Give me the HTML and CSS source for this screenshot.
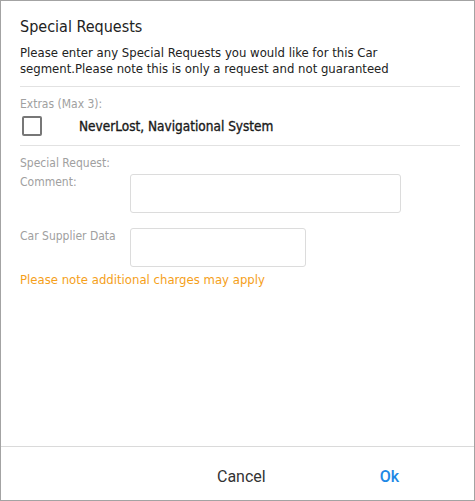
FILE: index.html
```html
<!DOCTYPE html>
<html>
<head>
<meta charset="utf-8">
<link rel="stylesheet" href="styles.css">
</head>
<body>
<div class="dialog">
  <div class="content">
    <h1 class="title">Special Requests</h1>
    <p class="intro">Please enter any Special Requests you would like for this Car segment.Please note this is only a request and not guaranteed</p>
    <div class="section">
      <div class="muted">Extras (Max 3):</div>
      <label class="extra">
        <span class="checkbox"></span>
        <span class="extra-label">NeverLost, Navigational System</span>
      </label>
    </div>
    <div class="section section-last">
      <div class="muted">Special Request:</div>
      <div class="field">
        <div class="muted field-label">Comment:</div>
        <div class="box box-comment"></div>
      </div>
      <div class="field">
        <div class="muted field-label">Car Supplier Data</div>
        <div class="box box-supplier"></div>
      </div>
      <div class="warning">Please note additional charges may apply</div>
    </div>
  </div>
  <div class="footer">
    <button class="btn btn-cancel">Cancel</button>
    <button class="btn btn-ok">Ok</button>
  </div>
</div>
</body>
</html>
```
FILE: styles.css
```css
html, body {
  margin: 0;
  padding: 0;
  background: #fff;
}
.dialog {
  box-sizing: border-box;
  width: 475px;
  height: 501px;
  border: 1px solid #a3a3a3;
  display: flex;
  flex-direction: column;
  font-family: "DejaVu Sans Condensed", "DejaVu Sans", sans-serif;
  color: #222;
}
.content {
  flex: 1;
  padding: 0 14px 0 19px;
}
.title {
  margin: 16px 0 0;
  font-size: 16px;
  font-weight: normal;
  line-height: 20px;
  color: #222;
}
.intro {
  margin: 8px 0 0;
  font-size: 13px;
  line-height: 16px;
  padding-bottom: 9px;
  border-bottom: 1px solid #e2e2e2;
}
.section {
  border-bottom: 1px solid #e2e2e2;
  padding-top: 9px;
  padding-bottom: 9px;
}
.section-last {
  border-bottom: none;
  padding-top: 9px;
}
.muted {
  font-size: 12px;
  line-height: 16px;
  color: #a0a0a0;
}
.extra {
  display: flex;
  align-items: center;
  margin-top: 4px;
}
.checkbox {
  box-sizing: border-box;
  width: 20px;
  height: 20px;
  margin-left: 2px;
  border: 2px solid #777;
  border-radius: 2px;
}
.extra-label {
  margin-left: 37px;
  font-size: 13.5px;
  font-weight: normal;
  color: #1a1a1a;
  -webkit-text-stroke: 0.35px #1a1a1a;
}
.field {
  display: flex;
  align-items: flex-start;
  margin-top: 3px;
}
.field + .field {
  margin-top: 15px;
}
.field-label {
  width: 110px;
}
.box {
  box-sizing: border-box;
  border: 1px solid #dcdcdc;
  border-radius: 3px;
  background: #fff;
}
.box-comment {
  width: 271px;
  height: 39px;
}
.box-supplier {
  width: 176px;
  height: 39px;
}
.warning {
  margin-top: 5px;
  font-size: 13px;
  line-height: 16px;
  color: #f5a01a;
}
.footer {
  box-sizing: border-box;
  height: 54px;
  padding-top: 5px;
  border-top: 1px solid #dadada;
  display: flex;
  align-items: center;
  font-family: Roboto, sans-serif;
}
.btn {
  border: none;
  background: none;
  font-family: Roboto, sans-serif;
  font-size: 16px;
  padding: 0;
  cursor: pointer;
}
.btn-cancel {
  margin-left: 216px;
  color: #333;
}
.btn-ok {
  margin-left: 114px;
  color: #1e88e5;
  font-weight: 500;
}
```
